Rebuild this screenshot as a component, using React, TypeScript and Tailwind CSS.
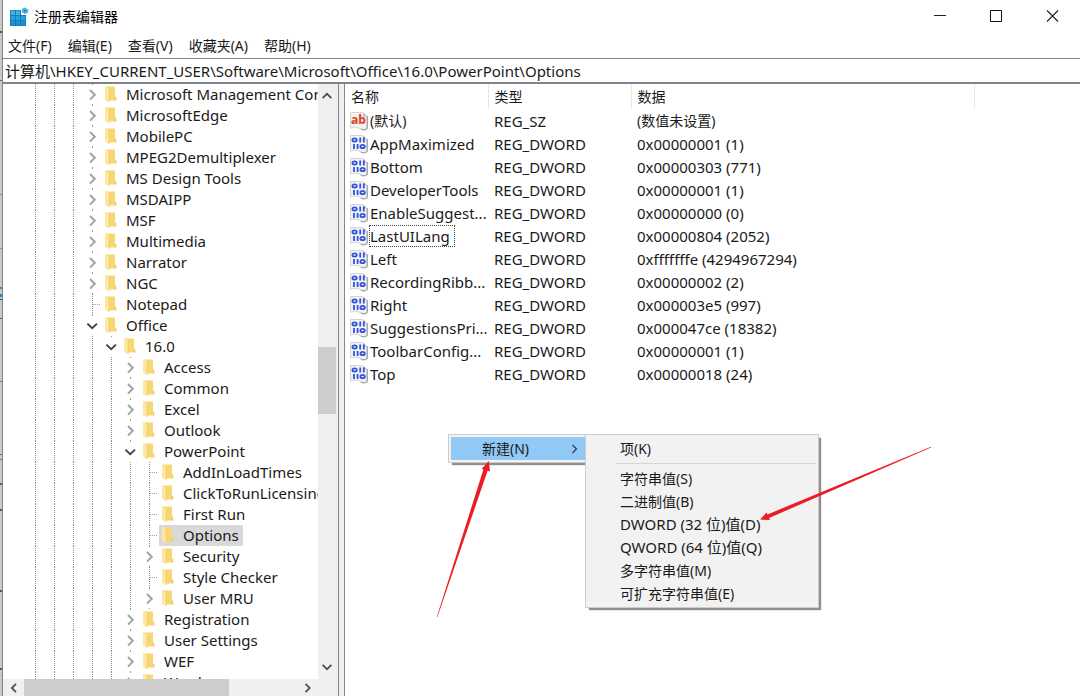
import React from "react";

type Node = { label: string; level: number; state: "closed" | "open" | "leaf"; selected?: boolean };

const nodes: Node[] = [
  { label: "Microsoft Management Console", level: 3, state: "closed" },
  { label: "MicrosoftEdge", level: 3, state: "closed" },
  { label: "MobilePC", level: 3, state: "closed" },
  { label: "MPEG2Demultiplexer", level: 3, state: "closed" },
  { label: "MS Design Tools", level: 3, state: "closed" },
  { label: "MSDAIPP", level: 3, state: "closed" },
  { label: "MSF", level: 3, state: "closed" },
  { label: "Multimedia", level: 3, state: "closed" },
  { label: "Narrator", level: 3, state: "closed" },
  { label: "NGC", level: 3, state: "closed" },
  { label: "Notepad", level: 3, state: "leaf" },
  { label: "Office", level: 3, state: "open" },
  { label: "16.0", level: 4, state: "open" },
  { label: "Access", level: 5, state: "closed" },
  { label: "Common", level: 5, state: "closed" },
  { label: "Excel", level: 5, state: "closed" },
  { label: "Outlook", level: 5, state: "closed" },
  { label: "PowerPoint", level: 5, state: "open" },
  { label: "AddInLoadTimes", level: 6, state: "leaf" },
  { label: "ClickToRunLicensing", level: 6, state: "leaf" },
  { label: "First Run", level: 6, state: "leaf" },
  { label: "Options", level: 6, state: "leaf", selected: true },
  { label: "Security", level: 6, state: "closed" },
  { label: "Style Checker", level: 6, state: "leaf" },
  { label: "User MRU", level: 6, state: "closed" },
  { label: "Registration", level: 5, state: "closed" },
  { label: "User Settings", level: 5, state: "closed" },
  { label: "WEF", level: 5, state: "closed" },
  { label: "Word", level: 5, state: "closed" },
];

const values = [
  ["(默认)", "REG_SZ", "(数值未设置)"],
  ["AppMaximized", "REG_DWORD", "0x00000001 (1)"],
  ["Bottom", "REG_DWORD", "0x00000303 (771)"],
  ["DeveloperTools", "REG_DWORD", "0x00000001 (1)"],
  ["EnableSuggest...", "REG_DWORD", "0x00000000 (0)"],
  ["LastUILang", "REG_DWORD", "0x00000804 (2052)"],
  ["Left", "REG_DWORD", "0xfffffffe (4294967294)"],
  ["RecordingRibb...", "REG_DWORD", "0x00000002 (2)"],
  ["Right", "REG_DWORD", "0x000003e5 (997)"],
  ["SuggestionsPri...", "REG_DWORD", "0x000047ce (18382)"],
  ["ToolbarConfig...", "REG_DWORD", "0x00000001 (1)"],
  ["Top", "REG_DWORD", "0x00000018 (24)"],
];

const menus = ["文件(F)", "编辑(E)", "查看(V)", "收藏夹(A)", "帮助(H)"];
const newItems = ["字符串值(S)", "二进制值(B)", "DWORD (32 位)值(D)", "QWORD (64 位)值(Q)", "多字符串值(M)", "可扩充字符串值(E)"];

// Mostly Latin strings are set one size larger than Chinese ones.
const sizeFor = (text: string) => (/[A-Za-z0-9]{2}/.test(text) ? "text-[15px]" : "text-[14px]");

function Chevron({ d, color = "#505050", width = 2 }: { d: string; color?: string; width?: number }) {
  return (
    <svg width="12" height="12" viewBox="0 0 12 12" fill="none" stroke={color} strokeWidth={width} aria-hidden="true">
      <path d={d} />
    </svg>
  );
}

const RIGHT = "M3.5 1.8 7.7 6l-4.2 4.2";
const LEFT = "M8 1.8 3.8 6 8 10.2";
const DOWN = "M1.6 3.8 6 8.2l4.4-4.4";
const UP = "M1.6 8.2 6 3.8l4.4 4.4";

function Guide({ kind }: { kind: "line" | "leaf" | "open" | "closed" }) {
  return (
    <svg width="19" height="21" viewBox="0 0 19 21" fill="none" className="shrink-0" aria-hidden="true">
      {(kind === "line" || kind === "leaf") && (
        <path d="M9.5 0v21" stroke="#8c8c8c" strokeDasharray="1 1" />
      )}
      {kind === "leaf" && <path d="M10 10.5h8" stroke="#a0a0a0" strokeDasharray="1 1" />}
      {kind === "closed" && (
        <>
          <path d="M9.5 0v1M9.5 20v1" stroke="#9a9a9a" />
          <path d="M7 6 11.8 10.8 7 15.6" stroke="#a3a3a3" strokeWidth="2" />
        </>
      )}
      {kind === "open" && (
        <>
          <path d="M9.5 0v1" stroke="#9a9a9a" />
          <path d="M4.4 8.6 9.2 13.2 14 8.6" stroke="#454545" strokeWidth="2" />
        </>
      )}
    </svg>
  );
}

function Folder() {
  return (
    <svg width="24" height="21" viewBox="0 0 24 21" className="shrink-0" aria-hidden="true">
      <path d="M4 2.4h9v10l1.2.6v3.6H6z" fill="#f7d774" />
      <path d="M13 12.4l1.2.6v3.6H13z" fill="#eecb62" />
      <path d="M3 2 7.2 4.4v13.8L3 16z" fill="#ffe7a0" />
      <path d="M7.2 4.6v13.2" stroke="#e9c766" strokeWidth=".7" />
    </svg>
  );
}

function RegeditIcon() {
  return (
    <svg width="20" height="20" viewBox="0 0 20 20" aria-hidden="true">
      <path d="M1 3h11v5h5v11H1z" fill="#1173ab" />
      <path d="M1.6 3.6h4.4v4.4H1.6zM6.8 3.6h4.4v4.4H6.8z" fill="#3cb2e2" />
      <path d="M1.6 8.8h4.4v4.4H1.6zM6.8 8.8h4.4v4.4H6.8zM12 8.8h4.4v4.4H12z" fill="#25a3dc" />
      <path d="M1.6 14h4.4v4.4H1.6zM6.8 14h4.4v4.4H6.8zM12 14h4.4v4.4H12z" fill="#1b93d2" />
      <path d="m16 .4 3.6 2.4-.8 3.2-3.4 1-2.8-2 .6-3.4z" fill="#4fb9e6" />
      <path d="m16 2.4 1.6 1-.4 1.4-1.4.4-1.2-.8.2-1.6z" fill="#2a8fc4" />
    </svg>
  );
}

function Paper({ children }: { children: React.ReactNode }) {
  return (
    <svg width="20" height="20" viewBox="0 0 20 20" className="shrink-0" aria-hidden="true">
      <path d="M1.5 1.5h12l4 3.6V17c-2 2-4 2-6 .8s-5-2.4-10-.6z" fill="#f3f3f5" stroke="#cfcfd1" strokeWidth=".9" />
      <path d="M18.4 5v12.4c-2.2 2-4.4 1.8-6.6.6" fill="none" stroke="#a5a5a7" strokeWidth="1.1" />
      <path d="M14 1.2 18.4 5.4H14z" fill="#c4c4c6" />
      {children}
    </svg>
  );
}

function StringIcon() {
  return (
    <Paper>
      <text x="2" y="13" fontFamily="'Noto Sans', sans-serif" fontSize="12" fontWeight="800" fill="#dd4a2c">
        ab
      </text>
    </Paper>
  );
}

function BinaryIcon() {
  return (
    <Paper>
      <g fill="none" stroke="#2f55dc" strokeWidth="1.8">
        <ellipse cx="5.6" cy="6" rx="2.2" ry="1.6" />
        <path d="M11.2 3.6v4.8M14.8 3.6v4.8" />
        <path d="M5 9.9v5.2M8.6 9.9v5.2" />
        <ellipse cx="13.6" cy="12.5" rx="2.2" ry="1.7" />
      </g>
    </Paper>
  );
}

function TreeRow({ node }: { node: Node }) {
  return (
    <li role="treeitem" aria-selected={!!node.selected} className="flex h-[21px] items-center">
      {Array.from({ length: node.level }, (_, i) => (
        <Guide key={i} kind="line" />
      ))}
      <Guide kind={node.state} />
      <button
        type="button"
        className={`flex h-[21px] items-center whitespace-nowrap pr-1 ${node.selected ? "bg-[#d9d9d9]" : ""}`}
      >
        <Folder />
        {node.label}
      </button>
    </li>
  );
}

// Slivers of the window behind, as [y, height, colour].
const specks: [number, number, string][] = [
  [31, 2, "#6b5a3a"], [80, 1, "#8a6a20"], [194, 1, "#c08a2a"], [248, 1, "#c08a2a"],
  [287, 2, "#777"], [294, 3, "#2f86b8"], [299, 1, "#444"], [318, 1, "#d03030"],
  [381, 1, "#a87414"], [454, 1, "#8a6a20"], [459, 1, "#a87414"], [483, 2, "#7a5518"],
  [509, 2, "#7a5518"], [590, 2, "#7a5518"], [668, 2, "#7a5518"],
];

export default function App() {
  return (
    <div className="relative flex h-screen overflow-hidden bg-white font-['Noto_Sans','Noto_Sans_CJK_SC',sans-serif] text-[14px] text-[#1a1a1a]">
      <div className="w-[3px] shrink-0 overflow-hidden border-r border-[#808488] bg-[#c9c9c9]">
        <svg width="2" height="696" viewBox="0 0 2 696" aria-hidden="true">
          {specks.map(([y, h, c]) => (
            <rect key={y} x="0" y={y} width="2" height={h} fill={c} />
          ))}
        </svg>
      </div>
      <div className="flex min-w-0 flex-1 flex-col">
        <header className="flex h-[33px] shrink-0 items-center pl-[6px]">
          <RegeditIcon />
          <h1 className="flex-1 pl-[5px] text-black">注册表编辑器</h1>
          <button type="button" aria-label="最小化" className="flex h-full w-14 items-center justify-center">
            <svg width="13" height="13" viewBox="0 0 13 13"><path d="M0 5.5h12" stroke="#222" /></svg>
          </button>
          <button type="button" aria-label="最大化" className="flex h-full w-14 items-center justify-center">
            <svg width="13" height="13" viewBox="0 0 13 13"><path d="M.5.5h11v11H.5z" fill="none" stroke="#111" /></svg>
          </button>
          <button type="button" aria-label="关闭" className="flex h-full w-14 items-center justify-center">
            <svg width="13" height="13" viewBox="0 0 13 13"><path d="m1 .5 11 11M12 .5l-11 11" stroke="#222" strokeWidth="1.1" /></svg>
          </button>
        </header>
        <nav className="flex h-[25px] shrink-0 items-center gap-4 pl-[5px]">
          {menus.map((m) => (
            <button key={m} type="button">{m}</button>
          ))}
        </nav>
        <input
          aria-label="地址"
          className="h-6 shrink-0 border-t border-[#808488] bg-white pb-px pl-[2px] text-[15px] outline-none"
          defaultValue="计算机\HKEY_CURRENT_USER\Software\Microsoft\Office\16.0\PowerPoint\Options"
        />
        <div className="flex min-h-0 flex-1 border-t-2 border-[#808488] bg-[#f0f0f0]">
          <aside className="flex w-[336px] shrink-0 flex-col border-r border-[#828790]">
            <div className="flex min-h-0 flex-1">
              <ul role="tree" className="min-w-0 flex-1 overflow-hidden bg-white pl-[23px] text-[15px]">
                {nodes.map((n) => (
                  <TreeRow key={n.label} node={n} />
                ))}
              </ul>
              <div className="flex w-5 shrink-0 flex-col items-center pr-0.5">
                <div className="flex h-6 items-center"><Chevron d={UP} width={1.8} /></div>
                <div className="flex w-full flex-1 flex-col">
                  <div className="flex-[239]" />
                  <div className="h-[67px] bg-[#cdcdcd]" />
                  <div className="flex-[241]" />
                </div>
                <div className="flex h-6 items-center"><Chevron d={DOWN} width={1.8} /></div>
              </div>
            </div>
            <div className="flex h-[17px] items-center pr-5">
              <div className="flex w-[21px] justify-center"><Chevron d={LEFT} width={1.8} /></div>
              <div className="flex h-full flex-1">
                <div className="w-[205px] bg-[#cdcdcd]" />
              </div>
              <div className="flex w-[21px] justify-center"><Chevron d={RIGHT} width={1.8} /></div>
            </div>
          </aside>
          <main className="ml-[5px] min-w-0 flex-1 border-l border-[#828790] bg-white">
            <table className="w-full table-fixed border-collapse text-left">
              <colgroup>
                <col className="w-[143px]" />
                <col className="w-[143px]" />
                <col className="w-[343px]" />
                <col />
              </colgroup>
              <thead>
                <tr className="h-[25px]">
                  <th className="border-r border-[#e8e8e8] py-0 pl-[6px] font-normal">名称</th>
                  <th className="border-r border-[#e8e8e8] py-0 pl-[6px] font-normal">类型</th>
                  <th className="border-r border-[#e8e8e8] py-0 pl-[6px] font-normal">数据</th>
                  <td />
                </tr>
              </thead>
              <tbody>
                {values.map(([name, type, data], i) => (
                  <tr key={name} className="h-[23px]">
                    <td className="py-0 pl-1">
                      <div className={`flex h-[23px] items-center whitespace-nowrap ${sizeFor(name)}`}>
                        {i === 0 ? <StringIcon /> : <BinaryIcon />}
                        <span
                          className={
                            name === "LastUILang"
                              ? "border border-dotted border-[#444] pr-1 leading-5"
                              : "pl-px leading-5"
                          }
                        >
                          {name}
                        </span>
                      </div>
                    </td>
                    <td className="py-0 pl-[6px] text-[15px] leading-5">{type}</td>
                    <td className={`py-0 pl-[6px] leading-5 ${sizeFor(data)}`}>{data}</td>
                    <td />
                  </tr>
                ))}
              </tbody>
            </table>
          </main>
        </div>
      </div>

      <div role="menu" className="absolute left-[448px] top-[434px] w-[140px] border border-[#cccccc] bg-[#f2f2f2] p-0.5 shadow-[3px_3px_1px_-1px_#8f8f8f]">
        <button type="button" role="menuitem" className="flex h-[23px] w-full items-center bg-[#91c9f7] pl-[31px] pr-1">
          <span className="flex-1 text-left">新建(N)</span>
          <Chevron d="M3.5 2 7.5 6l-4 4" color="#333" width={1.1} />
        </button>
      </div>
      <div role="menu" className="absolute left-[585px] top-[434px] w-[234px] border border-[#cccccc] bg-[#f2f2f2] p-0.5 shadow-[3px_3px_1px_-1px_#8f8f8f]">
        <button type="button" role="menuitem" className="flex h-[23px] w-full items-center pl-8">项(K)</button>
        <div className="mb-[3px] ml-7 mt-[3px] border-t border-[#d7d7d7]" />
        {newItems.map((t) => (
          <button key={t} type="button" role="menuitem" className={`flex h-[23px] w-full items-center pl-8 ${sizeFor(t)}`}>
            {t}
          </button>
        ))}
      </div>

      <svg className="pointer-events-none absolute left-0 top-0" width="1080" height="696" viewBox="0 0 1080 696" aria-hidden="true">
        <path d="M436.8 617 483.4 469.4 481.8 468.8 488.8 461 490 471.6 487.6 470.8 437.4 617z" fill="#ed1c24" />
        <path d="M931 446.8 767.5 514.4 766.6 512.4 760 519.6 770 520 769 518 931 447.5z" fill="#ed1c24" />
      </svg>
    </div>
  );
}
